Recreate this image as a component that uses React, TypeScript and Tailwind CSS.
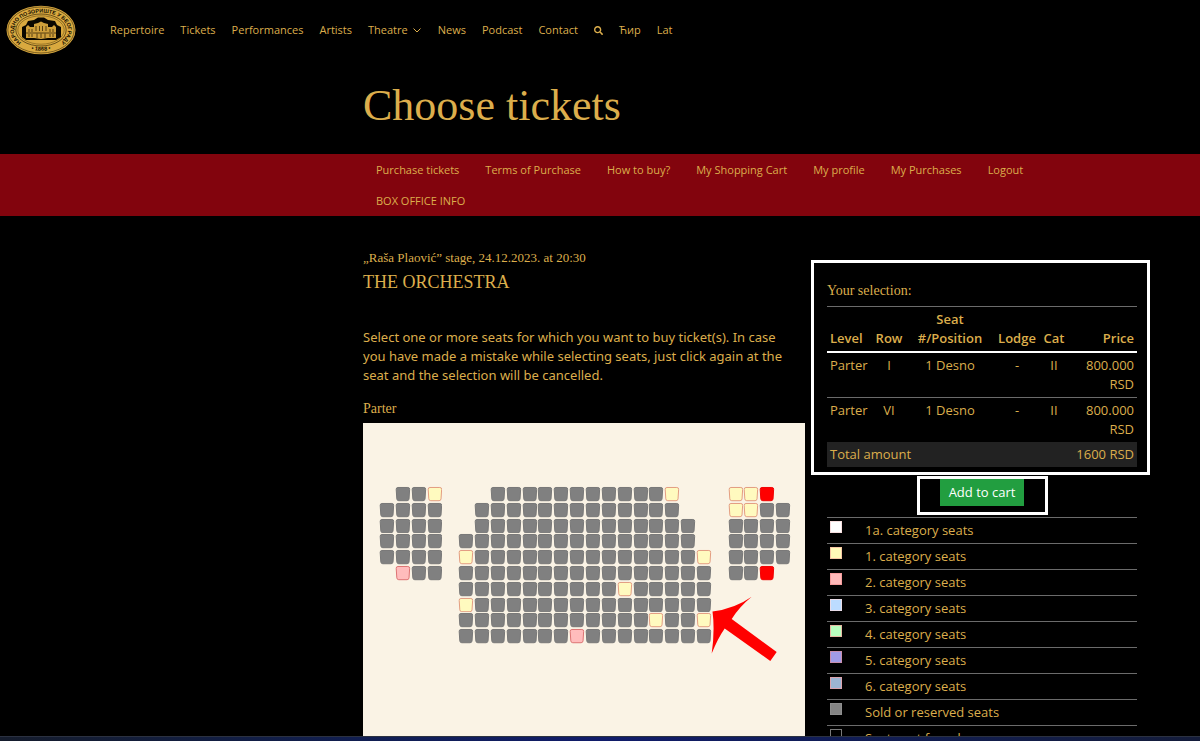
import { useState } from "react";
import { FaSearch } from "react-icons/fa";

const navLinks = ["Repertoire", "Tickets", "Performances", "Artists", "Theatre", "News", "Podcast", "Contact"];

const accountLinks = [
  "Purchase tickets",
  "Terms of Purchase",
  "How to buy?",
  "My Shopping Cart",
  "My profile",
  "My Purchases",
  "Logout",
  "BOX OFFICE INFO",
];

const selection = [
  { level: "Parter", row: "I", seat: "1 Desno", lodge: "-", cat: "II", price: "800.000 RSD" },
  { level: "Parter", row: "VI", seat: "1 Desno", lodge: "-", cat: "II", price: "800.000 RSD" },
];

const legend = [
  { label: "1a. category seats", swatch: "bg-white border-[#f7dede]" },
  { label: "1. category seats", swatch: "bg-[#fffab8] border-[#f6c6a4]" },
  { label: "2. category seats", swatch: "bg-[#ffb9b9] border-[#f59c9c]" },
  { label: "3. category seats", swatch: "bg-[#bcdcff] border-[#e8dce8]" },
  { label: "4. category seats", swatch: "bg-[#b9ffbf] border-[#e6b9a4]" },
  { label: "5. category seats", swatch: "bg-[#a09be6] border-[#c98fae]" },
  { label: "6. category seats", swatch: "bg-[#9cb4d2] border-[#dba4ae]" },
  { label: "Sold or reserved seats", swatch: "bg-[#858585] border-[#8f8f8f]" },
  { label: "Seats not found", swatch: "bg-black border-[#7a7a7a]" },
];

// g: sold, y: 1st category, p: 2nd category, r: selected, ".": aisle
const seatRows = [
  ".ggy...gggggggggggy...yyr.",
  "gggg..ggggggggggggg...yygg",
  "gggg..gggggggggggggg..gggg",
  "gggg.ggggggggggggggg..gggg",
  "gggg.yggggggggggggggy.gggg",
  ".pgg.gggggggggggggggg.ggr.",
  ".....ggggggggggyggggg.....",
  ".....yggggggggggggggg.....",
  ".....ggggggggggggyggy.....",
  ".....gggggggpgggggggg.....",
];

const seatColors: Record<string, { fill: string; stroke: string; name: string }> = {
  g: { fill: "#808080", stroke: "#777777", name: "sold" },
  y: { fill: "#fffabf", stroke: "#e39b80", name: "1. category" },
  p: { fill: "#ffbcbc", stroke: "#dc7272", name: "2. category" },
  r: { fill: "#ff0000", stroke: "#f00000", name: "selected" },
};

function Logo() {
  return (
    <svg viewBox="0 0 70 50" className="h-[50px] w-[70px]" role="img" aria-label="National Theatre">
      <defs>
        <path id="ringTop" d="M19.200 39.600 A27 17.700 0 1 1 50.800 39.600" />
        <path id="ringBottom" d="M20 43.200 A31.500 21.300 0 0 0 50 43.200" />
      </defs>
      <ellipse cx="35" cy="25" rx="34.5" ry="24.3" fill="#d9a93f" />
      <ellipse cx="35" cy="25" rx="33.2" ry="23" fill="none" stroke="#3a2a08" strokeWidth="0.6" />
      <ellipse cx="35" cy="25" rx="25.2" ry="16" fill="none" stroke="#3a2a08" strokeWidth="0.7" />
      <ellipse cx="35" cy="25" rx="23.2" ry="14.2" fill="none" stroke="#5a420f" strokeWidth="0.5" />
      <text fill="#120c00" fontSize="5.4" fontWeight="700" fontFamily="Liberation Sans, sans-serif">
        <textPath href="#ringTop" startOffset="50%" textAnchor="middle">НАРОДНО ПОЗОРИШТЕ У БЕОГРАДУ</textPath>
      </text>
      <text fill="#120c00" fontSize="5.6" fontWeight="700" fontFamily="Liberation Sans, sans-serif">
        <textPath href="#ringBottom" startOffset="50%" textAnchor="middle">• 1868 •</textPath>
      </text>
      <path d="M16 32 V22 L20 20 L22 16 L28 15 L32 12.5 H38 L42 15 L49 16 L51 20 L55 22 V32 L50 35 H20 Z" fill="#0a0700" />
      <path d="M20 33 V22 L22 20 L24 22 H28 V19 L32 18 L35 16.500 L38 18 L42 19 V22 H46 L48 20 L50 22 V33 H42 L35 34 L28 33 Z" fill="#cf9f3a" />
      <path d="M20 28 H50 M23 24 V27 M26 24 V27 M30 21 V26 M33.500 21 V26 M36.500 21 V26 M40 21 V26 M44 24 V27 M47 24 V27 M23 29 V32 M26 29 V32 M31 28.500 V33 M35 28.500 V33 M39 28.500 V33 M44 29 V32 M47 29 V32" stroke="#3b2a08" strokeWidth="0.8" />
    </svg>
  );
}

function Seat({ kind, label }: { kind: string; label: string }) {
  const c = seatColors[kind];
  return (
    <button type="button" aria-label={`${label}, ${c.name}`} className="block">
      <svg viewBox="0 0 16 16" className="block h-full w-full">
        <path
          d="M3 1.500 H13 Q15 1.500 14.800 3.500 L14.200 13 Q14 14.900 12.200 14.900 H3.800 Q2 14.900 1.800 13 L1.200 3.500 Q1 1.500 3 1.500 Z"
          fill={c.fill}
          stroke={c.stroke}
          strokeWidth="1"
        />
      </svg>
    </button>
  );
}

function SeatMap() {
  return (
    <div className="relative min-h-0 flex-1 overflow-hidden bg-[#faf3e5] pt-[63px] pr-[14px] pl-4">
      <div className="grid h-[158px] grid-cols-[repeat(26,minmax(0,1fr))] grid-rows-[repeat(10,minmax(0,1fr))]">
        {seatRows.flatMap((row, r) =>
          row.split("").map((kind, c) =>
            kind === "." ? (
              <span key={`${r}-${c}`} />
            ) : (
              <Seat key={`${r}-${c}`} kind={kind} label={`Row ${r + 1}, seat ${c + 1}`} />
            ),
          ),
        )}
      </div>
      <svg viewBox="0 0 66 66" className="absolute top-[173px] left-[348px] h-[66px] w-[66px]" aria-hidden="true">
        <path
          d="M1.500 15.500 Q24 12.500 40.700 0.700 Q28 11 20.700 23 L65.700 56 L59.300 65 L13.700 32.500 Q7 42 0.700 57.500 Q4 34 1.500 15.500 Z"
          fill="#ff0000"
        />
      </svg>
    </div>
  );
}

function SelectionTable() {
  return (
    <table className="w-full table-fixed text-[13px] leading-[19px]">
      <colgroup>
        <col className="w-[45px]" />
        <col className="w-[34px]" />
        <col className="w-[88px]" />
        <col className="w-[46px]" />
        <col className="w-[28px]" />
        <col />
      </colgroup>
      <thead>
        <tr className="border-t border-b-2 border-t-[#6b6b6b] border-b-white align-bottom">
          <th className="py-[3px] pl-[3px] text-left font-semibold">Level</th>
          <th className="py-[3px] font-semibold">Row</th>
          <th className="py-[3px] font-semibold">Seat #/Position</th>
          <th className="py-[3px] font-semibold">Lodge</th>
          <th className="py-[3px] font-semibold">Cat</th>
          <th className="p-[3px] text-right font-semibold">Price</th>
        </tr>
      </thead>
      <tbody>
        {selection.map((s, i) => (
          <tr key={i} className="border-t border-[#6b6b6b] text-center align-top first:border-white">
            <td className="py-[3px] pl-[3px] text-left">{s.level}</td>
            <td className="py-[3px]">{s.row}</td>
            <td className="p-[3px]">{s.seat}</td>
            <td className="py-[3px]">{s.lodge}</td>
            <td className="py-[3px]">{s.cat}</td>
            <td className="p-[3px] text-right">{s.price}</td>
          </tr>
        ))}
        <tr className="bg-[#222222]">
          <td colSpan={3} className="p-[3px]">Total amount</td>
          <td colSpan={3} className="p-[3px] text-right">1600 RSD</td>
        </tr>
      </tbody>
    </table>
  );
}

export default function App() {
  const [added, setAdded] = useState(false);
  return (
    <div className="flex h-screen flex-col overflow-hidden bg-black font-['Open_Sans',sans-serif] text-[#dcae4c]">
      <header className="flex h-[60px] shrink-0 items-center pl-[6px]">
        <a href="#home"><Logo /></a>
        <nav className="ml-[34px] flex items-center gap-4 text-[11px]">
          {navLinks.map((l) => (
            <a key={l} href={`#${l.toLowerCase()}`} className="flex items-center gap-1">
              {l}
              {l === "Theatre" && (
                <svg viewBox="0 0 10 10" className="h-[10px] w-[10px]" aria-hidden="true">
                  <path d="M1.500 3.500 L5 7 L8.500 3.500" fill="none" stroke="currentColor" strokeWidth="1" />
                </svg>
              )}
            </a>
          ))}
          <button type="button" aria-label="Search"><FaSearch className="h-[9px] w-[9px]" /></button>
          <a href="#cir">Ћир</a>
          <a href="#lat">Lat</a>
        </nav>
      </header>

      <h1 className="h-[94px] shrink-0 pl-[363px] font-['Liberation_Serif',serif] text-[44px] leading-[92px]">Choose tickets</h1>

      <nav className="flex shrink-0 flex-wrap bg-[#82040d] pr-[50px] pl-[363px] text-[11px] leading-[31px]">
        {accountLinks.map((l) => (
          <a key={l} href={`#${l.toLowerCase().replaceAll(" ", "-")}`} className="px-[13px]">{l}</a>
        ))}
      </nav>

      <main className="flex min-h-0 flex-1 gap-[6px] pr-[50px] pl-[363px]">
        <section className="flex min-w-0 flex-1 flex-col pt-8">
          <p className="font-['Liberation_Serif',serif] text-[13px] leading-5">„Raša Plaović” stage, 24.12.2023. at 20:30</p>
          <h2 className="font-['Liberation_Serif',serif] text-[18px] leading-7">THE ORCHESTRA</h2>
          <p className="mt-8 pr-3 font-['Noto_Sans','Open_Sans',sans-serif] text-[13px] leading-[19px]">
            Select one or more seats for which you want to buy ticket(s). In case you have made a mistake while selecting seats, just click again at the seat and the selection will be cancelled.
          </p>
          <h3 className="mt-[14px] mb-1 font-['Liberation_Serif',serif] text-[14px] leading-5">Parter</h3>
          <SeatMap />
        </section>

        <aside className="w-[339px] shrink-0 pt-[44px]">
          <div className="border-[3px] border-white pt-[18px] pr-[10px] pb-[5px] pl-[13px]">
            <h3 className="mb-[5px] font-['Liberation_Serif',serif] text-[14px] leading-5">Your selection:</h3>
            <SelectionTable />
          </div>
          <div className="mt-px mr-[13px] mb-[2px] ml-4 flex justify-center">
            <div className="flex h-[39px] w-[131px] items-start justify-center border-[3px] border-white">
              <button
                type="button"
                aria-pressed={added}
                onClick={() => setAdded(true)}
                className="bg-[#229e40] px-[9px] text-[13px] leading-[27px] text-white"
              >
                Add to cart
              </button>
            </div>
          </div>
          <ul className="mr-[13px] ml-4 text-[13px]">
            {legend.map((l) => (
              <li key={l.label} className="flex h-[26px] gap-[23px] border-t border-[#6b6b6b] pl-[3px]">
                <span className={`mt-[3px] h-3 w-3 border ${l.swatch}`} />
                <span className="leading-[25px]">{l.label}</span>
              </li>
            ))}
          </ul>
        </aside>
      </main>

      <footer className="h-[5px] shrink-0 border-t border-[#2b3140] bg-linear-to-r from-[#151c2c] via-[#101c6a] to-[#141c3a]" />
    </div>
  );
}
